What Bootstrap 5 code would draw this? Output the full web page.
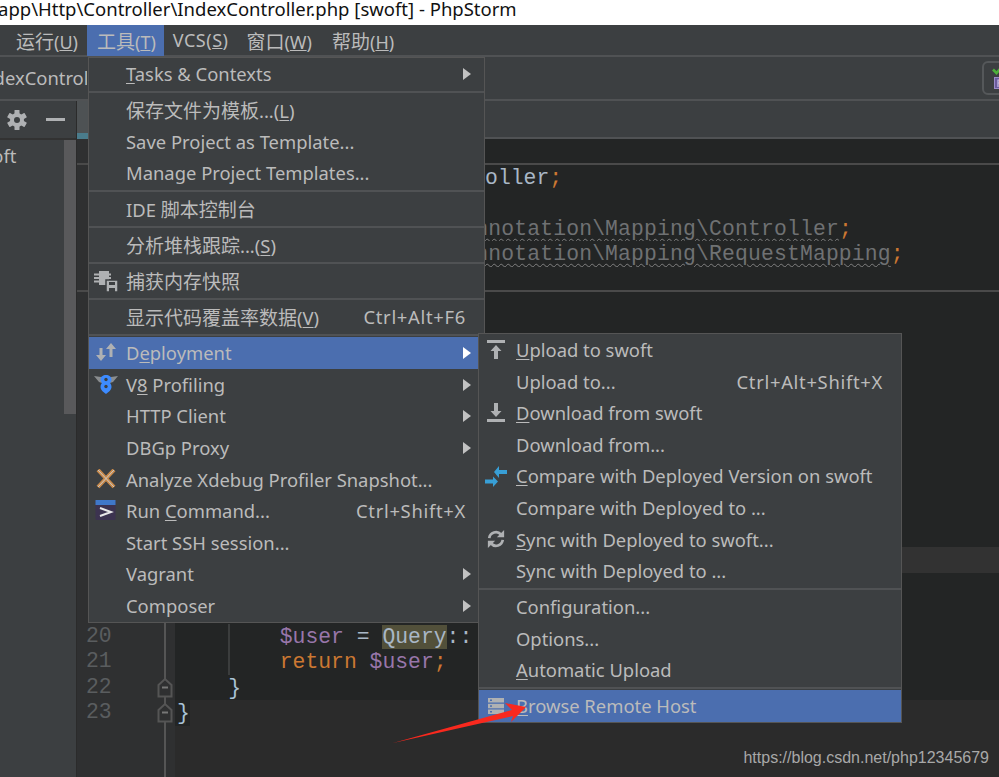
<!DOCTYPE html>
<html lang="zh">
<head>
<meta charset="utf-8">
<title>PhpStorm</title>
<link rel="stylesheet" href="https://cdn.jsdelivr.net/npm/bootstrap@5.3.0/dist/css/bootstrap.min.css">
<style>
html,body{height:100%;}
body{width:999px;height:777px;overflow:hidden;background:#3c3f41;color:#bbb;font-family:"Noto Sans","Noto Sans CJK SC",sans-serif;font-size:18.4px;position:relative;}
.cn{font-family:"Noto Sans CJK SC","Noto Sans",sans-serif;font-size:19px;}
.titlebar{height:25px;background:#fff;color:#111;font-size:18.5px;line-height:17px;white-space:nowrap;overflow:hidden;margin:0;padding-left:0;}
.titlebar span{margin-left:-2px;display:inline-block;}
.menubar{height:32px;background:#3c3f41;border-bottom:2px solid #505254;padding:0;flex-wrap:nowrap;justify-content:flex-start;}
.menubar .nav-link{color:#bbb;height:31px;line-height:31px;padding:0 10px;font-size:18px;}
.menubar .first{margin-left:6px;padding-right:9px;}
.menubar .topsel{background:#4b6eaf;color:#bbb;padding-right:8px;}
.menubar .vcs{padding:0 8px 0 9px;letter-spacing:.5px;}
.tabsrow{height:44px;border-bottom:2px solid #505254;overflow:hidden;}
.tabname{width:87px;overflow:hidden;white-space:nowrap;font-size:18.4px;line-height:42px;}
.tabname span{margin-left:-24px;display:inline-block;}
.widget{width:30px;height:34px;margin-right:-13px;border:2px solid #55585a;border-radius:6px;padding-left:8px;}
.workspace{height:676px;}
.sidepanel{width:77px;border-right:1px solid #2b2b2b;}
.sidetools{height:39px;border-bottom:2px solid #323232;padding-left:7px;gap:19px;}
.sidebody{height:274px;overflow:hidden;}
.sidetree{width:64px;font-size:18.4px;line-height:30px;white-space:nowrap;}
.sidetree span{margin-left:-31px;display:inline-block;padding-top:1px;}
.thumb{width:12px;background:#59595b;}
.mainpane{width:922px;}
.crumbs{height:38px;border-bottom:2px solid #505254;}
.crumbs i{display:block;width:11px;height:38px;background:linear-gradient(#4e5254 0 32px,#4a7c8c 32px);}
.editor{height:638px;background:#2b2b2b;font-family:"Liberation Mono",monospace;font-size:21.4px;}
.ln{height:25.5px;line-height:25.5px;white-space:pre;}
.gut{width:89px;flex:none;background:#2f3031;border-right:2px solid #555;color:#5a5d5f;padding-left:9px;position:relative;}
.gut2{width:9px;flex:none;background:#2f3031;}
.code{flex:1 1 auto;background:#232525;color:#a9b7c6;padding-left:2px;padding-top:1px;}
.code.shortdark{flex:0 0 13px;}
.sepl{box-shadow:0 -2px 0 #4a4a4a;position:relative;}
.caret .code{background:#323232;}
.guide{background-image:linear-gradient(#3b3d3d,#3b3d3d);background-size:2px 100%;background-position:53px 0;background-repeat:no-repeat;}
.restfill{flex:1 1 auto;}
.kw{color:#cc7832;}
.var{color:#9876aa;}
.dim{color:#6f7173;margin-left:3px;letter-spacing:.15px;text-decoration:underline wavy #808080 1px;text-underline-offset:3px;}
.hit{background:#52503a;}
.paren{color:#a9c3d6;}
.fold{position:absolute;right:-9px;top:2px;}
.idemenu{position:absolute;display:block;margin:0;padding:0;min-width:0;background:#3c3f41;border:1px solid #555;border-radius:0;color:#bbb;font-size:18.4px;z-index:5;}
.mainmenu{left:88px;top:57px;width:397px;padding-top:.2px;}
.submenu{left:478px;top:333px;width:424px;padding-top:0;z-index:6;}
.idemenu .dropdown-item{display:flex;align-items:center;height:31.6px;padding:0 18px 0 5px;color:#bbb;white-space:nowrap;background:transparent;}
.idemenu .dropdown-item.active{background:#4b6eaf;color:#bbb;}
.idemenu .dropdown-divider{height:0;margin:1.2px 0;border-top:2px solid #505254;opacity:1;}
.slot{width:32px;flex:none;display:flex;align-items:center;}
.ic1{margin-left:1px;}
.ic2{margin-left:2px;}
.ic3{margin-left:3px;}
.ic4{margin-left:4px;}
.lbl{flex:1 1 auto;}
.kb{letter-spacing:.7px;}
.arw{width:0;height:0;border-left:8px solid #c2c2c2;border-top:6px solid transparent;border-bottom:6px solid transparent;margin-right:-5px;}
.active .arw{border-left-color:#fff;}
.idemenu u{text-underline-offset:2px;}
.redarrow{position:absolute;left:390px;top:700px;z-index:9;}
.wm{position:absolute;right:10px;top:748px;font-family:"Liberation Sans",sans-serif;font-size:16px;color:#a8a8a8;line-height:20px;z-index:7;background:transparent;padding:0;}
</style>
</head>
<body>
<div class="titlebar"><span>app\Http\Controller\IndexController.php [swoft] - PhpStorm</span></div>
<nav class="navbar menubar">
  <a class="nav-link first"><span class="cn">运行</span>(<u>U</u>)</a>
  <a class="nav-link topsel"><span class="cn">工具</span>(<u>T</u>)</a>
  <a class="nav-link vcs">VCS(<u>S</u>)</a>
  <a class="nav-link"><span class="cn">窗口</span>(<u>W</u>)</a>
  <a class="nav-link"><span class="cn">帮助</span>(<u>H</u>)</a>
</nav>
<div class="tabsrow d-flex justify-content-between align-items-center">
  <div class="tabname"><span>IndexController</span></div>
  <div class="widget d-flex align-items-center">
    <svg width="14" height="24" viewBox="0 0 14 24"><path d="M1 3.500l3.500 3.500L9 2" fill="none" stroke="#4caf3a" stroke-width="2.600"/><rect x="2.500" y="11.500" width="11" height="11" fill="#6b5a9c" stroke="#9a8cc8"/><path d="M6 21v-7h4v3H6" fill="none" stroke="#c9c0e6" stroke-width="1.200"/></svg>
  </div>
</div>
<div class="workspace d-flex">
  <div class="sidepanel">
    <div class="sidetools d-flex align-items-center">
      <svg width="20" height="20" viewBox="0 0 20 20"><g fill="#afb1b3"><rect x="7.500" y="0" width="5" height="20" rx=".5"/><rect x="7.500" y="0" width="5" height="20" rx=".5" transform="rotate(60 10 10)"/><rect x="7.500" y="0" width="5" height="20" rx=".5" transform="rotate(120 10 10)"/></g><circle cx="10" cy="10" r="5" fill="none" stroke="#afb1b3" stroke-width="4"/><circle cx="10" cy="10" r="3" fill="#3c3f41"/></svg>
      <svg width="20" height="4" viewBox="0 0 20 4"><rect width="19" height="3" fill="#afb1b3"/></svg>
    </div>
    <div class="sidebody d-flex">
      <div class="sidetree"><span>swoft</span></div>
      <div class="thumb"></div>
    </div>
  </div>
  <div class="mainpane d-flex flex-column">
    <div class="crumbs"><i></i></div>
    <div class="editor d-flex flex-column">
      <div class="ln d-flex"><div class="gut"></div><div class="gut2"></div><div class="code"></div></div>
      <div class="ln d-flex sepl"><div class="gut"></div><div class="gut2"></div><div class="code">                       roller<span class="kw">;</span></div></div>
      <div class="ln d-flex"><div class="gut"></div><div class="gut2"></div><div class="code"></div></div>
      <div class="ln d-flex"><div class="gut"></div><div class="gut2"></div><div class="code">                       <span class="dim">nnotation\Mapping\Controller</span><span class="kw">;</span></div></div>
      <div class="ln d-flex"><div class="gut"></div><div class="gut2"></div><div class="code">                       <span class="dim">nnotation\Mapping\RequestMapping</span><span class="kw">;</span></div></div>
      <div class="ln d-flex"><div class="gut"></div><div class="gut2"></div><div class="code"></div></div>
      <div class="ln d-flex sepl"><div class="gut"></div><div class="gut2"></div><div class="code"></div></div>
      <div class="ln d-flex"><div class="gut"></div><div class="gut2"></div><div class="code"></div></div>
      <div class="ln d-flex"><div class="gut"></div><div class="gut2"></div><div class="code"></div></div>
      <div class="ln d-flex"><div class="gut"></div><div class="gut2"></div><div class="code"></div></div>
      <div class="ln d-flex"><div class="gut"></div><div class="gut2"></div><div class="code"></div></div>
      <div class="ln d-flex"><div class="gut"></div><div class="gut2"></div><div class="code"></div></div>
      <div class="ln d-flex"><div class="gut"></div><div class="gut2"></div><div class="code"></div></div>
      <div class="ln d-flex"><div class="gut"></div><div class="gut2"></div><div class="code"></div></div>
      <div class="ln d-flex"><div class="gut"></div><div class="gut2"></div><div class="code"></div></div>
      <div class="ln d-flex"><div class="gut"></div><div class="gut2"></div><div class="code"></div></div>
      <div class="ln d-flex caret"><div class="gut"></div><div class="gut2"></div><div class="code"></div></div>
      <div class="ln d-flex"><div class="gut"></div><div class="gut2"></div><div class="code"></div></div>
      <div class="ln d-flex"><div class="gut"></div><div class="gut2"></div><div class="code"></div></div>
      <div class="ln d-flex"><div class="gut">20</div><div class="gut2"></div><div class="code guide">        <span class="var">$user</span> = <span class="hit">Query</span>::                                         <span class="paren">()</span><span class="kw">;</span></div></div>
      <div class="ln d-flex"><div class="gut">21</div><div class="gut2"></div><div class="code guide">        <span class="kw">return</span> <span class="var">$user</span><span class="kw">;</span></div></div>
      <div class="ln d-flex"><div class="gut">22<svg class="fold" width="16" height="21" viewBox="0 0 16 21"><path d="M1.500 8L8 2l6.500 6v11.500h-13z" fill="#2f3031" stroke="#555" stroke-width="2"/><rect x="5" y="9.500" width="6" height="2" fill="#777"/></svg></div><div class="gut2"></div><div class="code">    <span class="paren">}</span></div></div>
      <div class="ln d-flex"><div class="gut">23<svg class="fold" width="16" height="21" viewBox="0 0 16 21"><path d="M1.500 8L8 2l6.500 6v11.500h-13z" fill="#2f3031" stroke="#555" stroke-width="2"/><rect x="5" y="9.500" width="6" height="2" fill="#777"/></svg></div><div class="gut2"></div><div class="code shortdark"><span class="paren">}</span></div></div>
      <div class="restfill d-flex"><div class="gut"></div><div class="gut2"></div></div>
    </div>
  </div>
</div>

<ul class="dropdown-menu show idemenu mainmenu list-unstyled">
  <li><a class="dropdown-item"><span class="slot"></span><span class="lbl"><u>T</u>asks &amp; Contexts</span><span class="arw"></span></a></li>
  <li><hr class="dropdown-divider"></li>
  <li><a class="dropdown-item"><span class="slot"></span><span class="lbl"><span class="cn">保存文件为模板</span>...(<u>L</u>)</span></a></li>
  <li><a class="dropdown-item"><span class="slot"></span><span class="lbl">Save Project as Template...</span></a></li>
  <li><a class="dropdown-item"><span class="slot"></span><span class="lbl">Manage Project Templates...</span></a></li>
  <li><hr class="dropdown-divider"></li>
  <li><a class="dropdown-item"><span class="slot"></span><span class="lbl">IDE <span class="cn">脚本控制台</span></span></a></li>
  <li><hr class="dropdown-divider"></li>
  <li><a class="dropdown-item"><span class="slot"></span><span class="lbl"><span class="cn">分析堆栈跟踪</span>...(<u>S</u>)</span></a></li>
  <li><hr class="dropdown-divider"></li>
  <li><a class="dropdown-item"><span class="slot"><svg width="26" height="22" viewBox="0 0 26 22"><g fill="#afb1b3"><rect x="5" y="1" width="10" height="14"/><rect x="0" y="3.500" width="17" height="2"/><rect x="0" y="7" width="17" height="2"/><rect x="0" y="10.500" width="17" height="2"/><path d="M12 10h12v12H12z" stroke="#3c3f41" stroke-width="1.500"/><rect x="15" y="12" width="6" height="3" fill="#3c3f41"/><rect x="15" y="18" width="6" height="4" fill="#3c3f41"/></g></svg></span><span class="lbl"><span class="cn">捕获内存快照</span></span></a></li>
  <li><hr class="dropdown-divider"></li>
  <li><a class="dropdown-item"><span class="slot"></span><span class="lbl"><span class="cn">显示代码覆盖率数据</span>(<u>V</u>)</span><span class="kb">Ctrl+Alt+F6</span></a></li>
  <li><hr class="dropdown-divider"></li>
  <li><a class="dropdown-item active"><span class="slot"><svg width="24" height="20" viewBox="0 0 24 20"><g fill="#afb1b3"><path d="M2 12h3.500V5h3v7H12l-5 6z"/><path d="M12 6h3.500v8h3V6H22L17 0z"/></g></svg></span><span class="lbl">D<u>e</u>ployment</span><span class="arw"></span></a></li>
  <li><a class="dropdown-item"><span class="slot"><svg width="24" height="19" viewBox="0 0 24 19"><path d="M0 1l7 1 1 6-3-1zM24 1l-7 1-1 6 3-1z" fill="#8a8d8f"/><path d="M12 0c3 0 5.500 1.500 5.500 4.500 0 2-1 3-1.500 3.500.5.500 1.500 2 1.500 4 0 3-3 5-5.500 7-2.500-2-5.500-4-5.500-7 0-2 1-3.500 1.500-4-.5-.5-1.500-1.500-1.500-3.500C6.500 1.500 9 0 12 0z" fill="#3d8bff"/><circle cx="12" cy="4.500" r="1.700" fill="#3c3f41"/><circle cx="12" cy="11.500" r="1.700" fill="#3c3f41"/></svg></span><span class="lbl">V<u>8</u> Profiling</span><span class="arw"></span></a></li>
  <li><a class="dropdown-item"><span class="slot"></span><span class="lbl">HTTP Client</span><span class="arw"></span></a></li>
  <li><a class="dropdown-item"><span class="slot"></span><span class="lbl">DBGp Proxy</span><span class="arw"></span></a></li>
  <li><a class="dropdown-item"><span class="slot"><svg class="ic2" width="20" height="20" viewBox="0 0 20 20"><path d="M2 1l16 17M18 1L2 18" stroke="#c98a4a" stroke-width="4"/><path d="M2 1l16 17M18 1L2 18" stroke="#c9c9c9" stroke-width="1"/></svg></span><span class="lbl">Analyze Xdebug Profiler Snapshot...</span></a></li>
  <li><a class="dropdown-item"><span class="slot"><svg class="ic1" width="21" height="21" viewBox="0 0 21 21"><rect x="0.500" y="0" width="20" height="20" rx="1.500" fill="#3c3350"/><rect x="0.500" y="0" width="20" height="5" fill="#3f78c9"/><path d="M5 8l11 4-11 4" fill="none" stroke="#e8e8e8" stroke-width="2"/></svg></span><span class="lbl">Run <u>C</u>ommand...</span><span class="kb">Ctrl+Shift+X</span></a></li>
  <li><a class="dropdown-item"><span class="slot"></span><span class="lbl">Start SSH session...</span></a></li>
  <li><a class="dropdown-item"><span class="slot"></span><span class="lbl">Vagrant</span><span class="arw"></span></a></li>
  <li><a class="dropdown-item"><span class="slot"></span><span class="lbl">Composer</span><span class="arw"></span></a></li>
</ul>

<ul class="dropdown-menu show idemenu submenu list-unstyled">
  <li><a class="dropdown-item"><span class="slot"><svg class="ic3" width="18" height="19" viewBox="0 0 18 19"><g fill="#afb1b3"><rect width="18" height="3"/><path d="M9 5l5.500 6H11v8H7v-8H3.500z"/></g></svg></span><span class="lbl"><u>U</u>pload to swoft</span></a></li>
  <li><a class="dropdown-item"><span class="slot"></span><span class="lbl">Upload to...</span><span class="kb">Ctrl+Alt+Shift+X</span></a></li>
  <li><a class="dropdown-item"><span class="slot"><svg class="ic3" width="18" height="19" viewBox="0 0 18 19"><g fill="#afb1b3"><rect y="16" width="18" height="3"/><path d="M9 14l5.500-6H11V0H7v8H3.500z"/></g></svg></span><span class="lbl"><u>D</u>ownload from swoft</span></a></li>
  <li><a class="dropdown-item"><span class="slot"></span><span class="lbl">Download from...</span></a></li>
  <li><a class="dropdown-item"><span class="slot"><svg class="ic1" width="22" height="21" viewBox="0 0 22 21"><g fill="#389fd6"><path d="M9 6l5-6v4h8v4h-8v4z"/><path d="M13 15.500l-5-5v3H0v4h8v3.500z"/></g></svg></span><span class="lbl"><u>C</u>ompare with Deployed Version on swoft</span></a></li>
  <li><a class="dropdown-item"><span class="slot"></span><span class="lbl">Compare with Deployed to ...</span></a></li>
  <li><a class="dropdown-item"><span class="slot"><svg class="ic3" width="18" height="18" viewBox="0 0 20 20"><g fill="none" stroke="#afb1b3" stroke-width="3"><path d="M2.500 9a7.500 7.500 0 0 1 13-4"/><path d="M17.500 11a7.500 7.500 0 0 1-13 4"/></g><g fill="#afb1b3"><path d="M19 0v8h-8z"/><path d="M1 20v-8h8z"/></g></svg></span><span class="lbl"><u>S</u>ync with Deployed to swoft...</span></a></li>
  <li><a class="dropdown-item"><span class="slot"></span><span class="lbl">Sync with Deployed to ...</span></a></li>
  <li><hr class="dropdown-divider"></li>
  <li><a class="dropdown-item"><span class="slot"></span><span class="lbl">Configuration...</span></a></li>
  <li><a class="dropdown-item"><span class="slot"></span><span class="lbl">Options...</span></a></li>
  <li><a class="dropdown-item"><span class="slot"></span><span class="lbl"><u>A</u>utomatic Upload</span></a></li>
  <li><hr class="dropdown-divider"></li>
  <li><a class="dropdown-item active"><span class="slot"><svg class="ic4" width="16" height="16" viewBox="0 0 16 16"><g fill="#afb1b3"><rect width="16" height="4.500"/><rect y="5.800" width="16" height="4.500"/><rect y="11.500" width="16" height="4.500"/></g><g fill="#4b6eaf"><rect x="2" y="1.500" width="2" height="1.500"/><rect x="2" y="7.300" width="2" height="1.500"/><rect x="2" y="13" width="2" height="1.500"/></g></svg></span><span class="lbl"><u>B</u>rowse Remote Host</span></a></li>
</ul>

<svg class="redarrow" width="140" height="50" viewBox="390 700 140 50"><polygon points="393,743 512,710 505,703 526,707 511,722 513,716" fill="#f9291e"/></svg>
<div class="wm">https://blog.csdn.net/php12345679</div>
<script src="https://cdn.jsdelivr.net/npm/bootstrap@5.3.0/dist/js/bootstrap.bundle.min.js"></script>
</body>
</html>
